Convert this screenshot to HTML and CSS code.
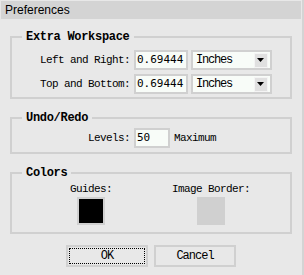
FILE: index.html
```html
<!DOCTYPE html>
<html lang="en">
<head>
    <meta charset="UTF-8">
    <title>Preferences</title>
    <link rel="stylesheet" href="styles.css">
</head>
<body>
    <div class="dialog">
        <div class="titlebar">Preferences</div>

        <fieldset class="group">
            <legend>Extra Workspace</legend>
            <div class="rows">
                <div class="row">
                    <span class="label">Left and Right:</span>
                    <span class="field">0.69444</span>
                    <span class="combo">
                        <span class="combo-text">Inches</span>
                        <span class="combo-btn">
                            <svg width="8" height="5" viewBox="0 0 8 5"><path d="M0 0h7l-3.5 4z" fill="#000"/></svg>
                        </span>
                    </span>
                </div>
                <div class="row">
                    <span class="label">Top and Bottom:</span>
                    <span class="field">0.69444</span>
                    <span class="combo">
                        <span class="combo-text">Inches</span>
                        <span class="combo-btn">
                            <svg width="8" height="5" viewBox="0 0 8 5"><path d="M0 0h7l-3.5 4z" fill="#000"/></svg>
                        </span>
                    </span>
                </div>
            </div>
        </fieldset>

        <fieldset class="group undo">
            <legend>Undo/Redo</legend>
            <div class="rows">
                <div class="row">
                    <span class="label">Levels:</span>
                    <span class="field small">50</span>
                    <span class="note">Maximum</span>
                </div>
            </div>
        </fieldset>

        <fieldset class="group colors">
            <legend>Colors</legend>
            <div class="swatches">
                <div class="swatch-col">
                    <span class="swatch-label">Guides:</span>
                    <span class="swatch guides"></span>
                </div>
                <div class="swatch-col">
                    <span class="swatch-label">Image Border:</span>
                    <span class="swatch border"></span>
                </div>
            </div>
        </fieldset>

        <div class="buttons">
            <button class="btn default"><span class="focus">OK</span></button>
            <button class="btn"><span class="focus">Cancel</span></button>
        </div>
    </div>
</body>
</html>
```

FILE: styles.css
```css
html, body {
    margin: 0;
    padding: 0;
}
body {
    background-color: #e8e8e8;
    font-family: "Liberation Mono", "DejaVu Sans Mono", monospace;
    font-size: 11px;
    letter-spacing: -0.6px;
    color: #000;
}
.dialog {
    width: 304px;
    height: 275px;
    box-sizing: border-box;
    border-right: 2px solid #d4d4d4;
    padding-top: 1px;
    overflow: hidden;
}
.titlebar {
    height: 18px;
    line-height: 18px;
    margin: 0 1px 0 1px;
    padding-left: 4px;
    background-color: #d4d4d4;
    font-family: "Liberation Sans", Arial, sans-serif;
    font-size: 12px;
    letter-spacing: 0;
}
.group {
    margin: 11px 10px 0 10px;
    padding: 0 0 3px 10px;
    border: 2px solid #d0d0d0;
    min-width: 0;
}
.group legend {
    padding: 0 4px;
    line-height: 14px;
    font-weight: bold;
    font-size: 12px;
    letter-spacing: -0.3px;
}
.undo, .colors {
    margin-top: 12px;
}
.rows {
    display: flex;
    flex-direction: column;
    gap: 4px;
    padding-top: 6px;
}
.undo .rows {
    padding-top: 3px;
    padding-bottom: 1px;
}
.row {
    display: flex;
    align-items: center;
    height: 20px;
}
.label {
    width: 108px;
    text-align: right;
    margin-right: 4px;
}
.field {
    box-sizing: border-box;
    width: 54px;
    height: 20px;
    border: 2px solid #d0d0d0;
    background-color: #f8fcf8;
    padding-left: 1px;
    font-family: "DejaVu Sans Mono", monospace;
    font-size: 11px;
    letter-spacing: 0;
    line-height: 16px;
}
.field.small {
    width: 36px;
}
.note {
    margin-left: 4px;
}
.combo {
    box-sizing: border-box;
    display: flex;
    align-items: flex-start;
    justify-content: space-between;
    width: 81px;
    height: 20px;
    margin-left: 3px;
    border: 2px solid #d0d0d0;
    background-color: #f8fcf8;
}
.combo-text {
    padding-left: 3px;
    line-height: 16px;
    font-size: 12px;
    letter-spacing: -1.2px;
}
.combo-btn {
    box-sizing: border-box;
    display: flex;
    align-items: center;
    justify-content: center;
    width: 14px;
    height: 15px;
    margin: 1px 2px 0 0;
    background-color: #e0e0e0;
    border: 1px solid #f4f4f4;
}
.colors {
    padding: 0 0 7px 10px;
}
.swatches {
    display: flex;
    justify-content: space-between;
    padding: 2px 29px 0 19px;
}
.swatch-col {
    width: 100px;
    display: flex;
    flex-direction: column;
    align-items: center;
    gap: 1px;
}
.swatch-label {
    line-height: 14px;
}
.swatch {
    box-sizing: border-box;
    width: 28px;
    height: 28px;
    border: 2px solid #d0d0d0;
}
.swatch.guides {
    background-color: #000;
}
.swatch.border {
    background-color: #d0d0d0;
}
.buttons {
    display: flex;
    justify-content: center;
    gap: 6px;
    margin-top: 11px;
}
.btn {
    box-sizing: border-box;
    width: 82px;
    height: 22px;
    padding: 1px;
    border: 2px solid #d0d0d0;
    background-color: #e8e8e8;
    font-family: "Liberation Mono", "DejaVu Sans Mono", monospace;
    font-size: 12px;
    letter-spacing: -1px;
    color: #000;
}
.btn .focus {
    display: block;
    box-sizing: border-box;
    height: 16px;
    line-height: 14px;
    border: 1px dotted transparent;
}
.btn.default .focus {
    border-color: #000;
}
```
